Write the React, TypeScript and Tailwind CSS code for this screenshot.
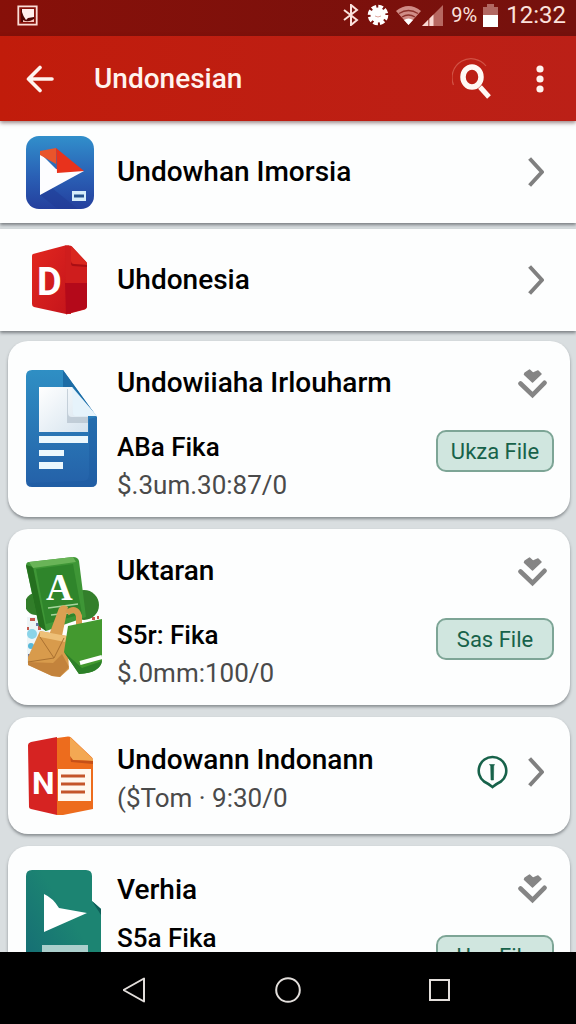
import type { ReactNode } from "react";

const ChevronRight = () => (
  <svg className="w-4 h-[30px] shrink-0" viewBox="0 0 16 30" fill="none" stroke="#808080" strokeWidth="4">
    <path d="M1.6 1.5 14 15 1.6 28.5" strokeLinejoin="round" />
  </svg>
);

const ChevronDouble = () => (
  <svg className="w-[29px] h-[30px]" viewBox="0 0 29 30">
    <path d="M7 4 11.500 1l3.500 3.200L20 2l3 3-8.500 8L6.500 5.500z" fill="#858585" stroke="#858585" strokeWidth="1.500" strokeLinejoin="round" />
    <path d="M2.500 14.500 14.500 26 26.500 13.800" fill="none" stroke="#858585" strokeWidth="4.600" strokeLinecap="round" />
  </svg>
);

const PlayTileIcon = () => (
  <svg className="w-[69px] h-[75px]" viewBox="0 0 69 75">
    <defs>
      <linearGradient id="tile" x1="0" y1="0" x2="0" y2="1">
        <stop offset="0" stopColor="#318fcb" />
        <stop offset=".55" stopColor="#2a60b5" />
        <stop offset="1" stopColor="#243f9d" />
      </linearGradient>
    </defs>
    <rect y="1" width="68" height="73" rx="13" fill="url(#tile)" />
    <path d="M14 60 26 53 52 74H32z" fill="#203994" opacity=".5" />
    <path d="M14 18v42l44-24-28-2z" fill="#fdfdff" />
    <path d="M14 16 30 13v16L14 20z" fill="#e9552b" />
    <path d="M30 13 58 36l-27 2z" fill="#e8321c" />
    <rect x="46" y="56" width="14" height="10" fill="#d6edfa" />
    <path d="M48 61h10" stroke="#25528f" strokeWidth="3" />
  </svg>
);

const BookIcon = () => (
  <svg className="w-[62px] h-[70px] ml-[5px]" viewBox="0 0 62 70">
    <defs>
      <linearGradient id="cover" x1="0" y1="0" x2="1" y2="1">
        <stop offset="0" stopColor="#e2271f" />
        <stop offset="1" stopColor="#c4141b" />
      </linearGradient>
    </defs>
    <path d="M2 9 34 .5h4l2 68.500h-5L3 62q-2-.5-2-3V11q0-1.500 1-2z" fill="url(#cover)" />
    <path d="M34 .5h4q2 0 3 1l14 15q1 1 1 2v43q0 2-2 3l-19 5z" fill="#cf1d1d" />
    <path d="M40 1 56 18v2l-13-1q-3 0-3-3z" fill="#d9271f" />
    <path d="M40 16q0 3 3 3l13 1v2l-14-1q-2 0-2-3z" fill="#a90f14" />
    <path d="M34 38h22v23q0 2-2 3l-19 5z" fill="#b4091a" />
    <text x="6" y="50" fontSize="38" fontWeight="700" fill="#fff" fontFamily="Roboto, sans-serif">D</text>
  </svg>
);

const BlueDocIcon = () => (
  <svg className="w-[71px] h-[119px]" viewBox="0 0 71 119">
    <defs>
      <linearGradient id="doc" x1="0" y1="0" x2="0" y2="1">
        <stop offset="0" stopColor="#2f8fc4" />
        <stop offset="1" stopColor="#2460a8" />
      </linearGradient>
      <linearGradient id="page" x1="0" y1="0" x2="1" y2="1">
        <stop offset="0" stopColor="#fff" />
        <stop offset="1" stopColor="#d5e3ee" />
      </linearGradient>
    </defs>
    <path d="M6 1h31l34 47v64q0 6-6 6H6q-6 0-6-6V7q0-6 6-6z" fill="url(#doc)" />
    <path d="M71 48v64q0 6-6 6H6l-4-4 56-2q5-1 5-6V50z" fill="#1c5a9f" opacity=".45" />
    <path d="M37 1v17h10l24 30z" fill="#1d6ca5" />
    <path d="M13 18h33l16 29v16H13z" fill="url(#page)" />
    <path d="M42 20v24q0 4 4 4h16v6H41V20z" fill="#b3c0cc" opacity=".7" />
    <path d="M46 18 71 47H50q-3 0-3-3z" fill="#e6f3fb" />
    <path d="M13 67h49v7H13zM13 81h25v6H13zM13 93h24v7H13z" fill="#ecf8fd" />
  </svg>
);

const ShoppingIcon = () => (
  <svg className="w-[77px] h-[122px]" viewBox="0 0 77 122">
    <circle cx="10" cy="47" r="11" fill="#317d29" />
    <circle cx="58" cy="48" r="15" fill="#337f2b" />
    <path d="M1 60h22v46H1z" fill="#edf5f7" />
    <circle cx="6" cy="77" r="5" fill="#8bd4e8" />
    <circle cx="5" cy="89" r="3" fill="#58b8d8" />
    <path d="M4 61h5v3H4zM12 69h3v4h-3zM1 70h2v3H1zM66 60h3v3h-3zM71 59h2v3h-2z" fill="#c5574c" />
    <path d="M10 66h3v3h-3zM2 97h3v3H2zM14 80h3v3h-3z" fill="#6a76a8" />
    <path d="M3 5 47 0q5 0 6 4l7 56-40 14-7-5L0 9q0-4 3-4z" fill="#3e9636" />
    <path d="M0 8 7 10l13 64-7-5z" fill="#25701f" />
    <path d="M10 12 47 7l9 50-36 10z" fill="#2f852b" />
    <path d="M3 5 47 0l3 5L7 11z" fill="#69b457" />
    <text x="20" y="43" fontSize="37" fontWeight="700" fill="#fff" fontFamily="Liberation Serif, serif">A</text>
    <path d="M22 51 52 47M25 58l27-3" stroke="#a7d59d" strokeWidth="1.500" />
    <path d="M23 78 33 51q4-5 9-1l-6 29z" fill="#dba052" />
    <path d="M41 56q9-7 12 3v13" fill="none" stroke="#d89b4d" strokeWidth="6" />
    <path d="M14 74 41 79l2 33-9 8-8-1L2 108v-8z" fill="#d89b4c" />
    <path d="M14 74 41 79l-2 6-25-5z" fill="#eec078" />
    <path d="M14 80 28 101 2 105M28 101l10-20" fill="none" stroke="#aa7131" />
    <path d="M2 105 27 106l9-9 7 13-9 10-8-1-24-11z" fill="#ba7936" opacity=".7" />
    <path d="M42 69 76 62v42q-2 12-23 13L38 95z" fill="#43992f" />
    <path d="M38 95 53 117q21-1 23-13l-20 7z" fill="#2d8029" />
    <path d="M54 106 76 100" stroke="#fff" strokeWidth="4" />
  </svg>
);

const OrangeDocIcon = () => (
  <svg className="w-[66px] h-[80px] ml-[2px]" viewBox="0 0 66 80">
    <path d="M29 2 40 .5q2 0 3 1l21 20q1 1 1 3V73l-30 6h-6z" fill="#ed6c1d" />
    <path d="M0 9q0-2 3-3l26-5v78L3 73q-2-.5-2-2z" fill="#d62322" />
    <path d="M42 1 65 23v2l-20-1q-3 0-3-4z" fill="#f3a853" />
    <path d="m42 20 3 4 20 1v3l-22-2z" fill="#c65018" />
    <path d="M30 33h33v32H30z" fill="#fff8ef" />
    <path d="M33 40h24M33 48h24M33 56h24" stroke="#c4552a" strokeWidth="3" />
    <text x="4" y="58" fontSize="32" fontWeight="700" fill="#fff" fontFamily="Roboto, sans-serif">N</text>
  </svg>
);

const TealDocIcon = () => (
  <svg className="w-[75px] h-[119px]" viewBox="0 0 75 119">
    <defs>
      <linearGradient id="teal" x1="0" y1="1" x2="1" y2="0">
        <stop offset="0" stopColor="#146875" />
        <stop offset=".6" stopColor="#1c8472" />
      </linearGradient>
    </defs>
    <path d="M6 0h54q6 0 6 6v25l9 8v80H0V6q0-6 6-6z" fill="url(#teal)" />
    <path d="M66 31 75 39v6z" fill="#0d5f59" />
    <path d="M18 24q9 4 15 14l28 5-43 19z" fill="#fff" />
    <path d="M16 75h46v12H16z" fill="#abcfcc" />
  </svg>
);

type FileCardProps = {
  icon: ReactNode;
  title: string;
  name: string;
  info?: string;
  action: string;
  compact?: boolean;
};

const FileCard = ({ icon, title, name, info, action, compact }: FileCardProps) => (
  <article className="flex h-44 shrink-0 rounded-[20px] bg-[#fdfefe] pl-[18px] pr-4 shadow-[0_2px_3px_rgba(60,65,70,0.5)]">
    <div className={compact ? "w-[91px] shrink-0 pt-6" : "w-[91px] shrink-0 pt-7"}>{icon}</div>
    <div className={compact ? "flex-1 pt-6" : "flex-1 pt-[22px]"}>
      <h2 className="whitespace-nowrap text-[28px] font-medium leading-10">{title}</h2>
      <p className={compact ? "mt-2 whitespace-nowrap text-[26px] font-medium leading-10" : "mt-6 whitespace-nowrap text-[26px] font-medium leading-10"}>{name}</p>
      {info && <p className="whitespace-nowrap text-[26px] leading-9 text-[#4a4a4a]">{info}</p>}
    </div>
    <div className="flex flex-col items-end pt-7">
      <button aria-label={`Expand ${title}`} className="mr-[7px]">
        <ChevronDouble />
      </button>
      <button className="mt-[31px] h-[42px] w-[118px] rounded-[10px] border-2 border-[#7da596] bg-[#d0e6df] text-[22px] text-[#17624a]">
        {action}
      </button>
    </div>
  </article>
);

const StatusBar = () => (
  <div className="flex h-9 shrink-0 items-center bg-gradient-to-r from-[#871009] to-[#75110d] pl-[17px] pr-[10px] text-[#fbe1dc]">
    <svg className="-mt-1.5 w-[21px] h-[21px]" viewBox="0 0 21 21">
      <path d="M1.300 1.300h18.400v18.400H1.300z" fill="none" stroke="#fbdcd6" strokeWidth="1.800" />
      <path d="M4 4h13v13H4z" fill="#4d0603" />
      <path d="M5 4h12v8l-6 1-2 2q-3-4-4-8z" fill="#fff0ed" />
      <path d="M6 15q5 3 11-1v3H6z" fill="#f5c4bd" />
    </svg>
    <div className="-mt-1.5 ml-auto flex items-center">
      <svg className="w-4 h-[22px]" viewBox="0 0 16 22" fill="none" stroke="currentColor" strokeWidth="2">
        <path d="M1 6l13 10-6 5V1l6 5L1 16" />
      </svg>
      <svg className="ml-2 w-[22px] h-[22px]" viewBox="0 0 22 22">
        <circle cx="11" cy="11" r="7.500" fill="#fff" />
        <circle cx="11" cy="11" r="7.800" fill="none" stroke="#fff" strokeWidth="5" strokeDasharray="4.300 1.830" />
        <path d="M8 12q3 2 6 0" fill="none" stroke="#e0a79f" />
      </svg>
      <svg className="ml-1.5 w-[27px] h-[21px]" viewBox="0 0 27 21">
        <path d="M1 6Q13.500-4 26 6L13.500 20z" fill="#d08c86" />
        <path d="M4 8.500q9.500-6 19 0M7 12q6.500-4 13 0" fill="none" stroke="#8b302a" strokeWidth="1.300" />
        <path d="M9 15q4.500-3 9 0l-4.500 5z" fill="#fff" />
      </svg>
      <svg className="w-[21px] h-[21px]" viewBox="0 0 21 21">
        <path d="M0 21 21 0v21z" fill="#b76861" />
        <path d="M0 21l6-6v6zM7.500 21v-7.500l4-4V21z" fill="#f9d8d2" />
      </svg>
      <span className="ml-2 text-xl leading-6">9%</span>
      <svg className="ml-1.5 w-[15px] h-[23px]" viewBox="0 0 15 23">
        <path d="M0 3h4V0h7v3h4v20H0z" fill="#b26862" />
        <path d="M0 11h15v12H0z" fill="#fff" />
      </svg>
      <span className="ml-2 text-2xl leading-6">12:32</span>
    </div>
  </div>
);

const AppHeader = () => (
  <header className="z-10 flex h-[85px] shrink-0 items-center bg-gradient-to-r from-[#c11c0b] to-[#bb2017] pl-[26px] pr-8 text-[#fff3ee] shadow-[0_2px_4px_rgba(60,20,20,0.5)]">
    <button aria-label="Back">
      <svg className="w-7 h-7" viewBox="0 0 28 28" fill="none" stroke="currentColor" strokeWidth="3.600" strokeLinecap="round" strokeLinejoin="round">
        <path d="M14 2.500 2.500 14 14 25.500M3 14h23" />
      </svg>
    </button>
    <h1 className="ml-10 flex-1 text-[28px] font-medium">Undonesian</h1>
    <button aria-label="Search">
      <svg className="w-[42px] h-[42px]" viewBox="0 0 42 42" fill="none">
        <path d="M1.500 27A19 19 0 0 1 34 8" stroke="#df7565" strokeWidth="1.200" opacity=".6" />
        <ellipse cx="20" cy="19" rx="9" ry="10" stroke="#fff8f4" strokeWidth="5.500" />
        <path d="M28 29 37 39" stroke="#fff8f4" strokeWidth="5" />
      </svg>
    </button>
    <button aria-label="More options" className="ml-[42px]">
      <svg className="w-2 h-7" viewBox="0 0 8 28" fill="currentColor">
        <circle cx="4" cy="4" r="3.600" />
        <circle cx="4" cy="14" r="3.600" />
        <circle cx="4" cy="24" r="3.600" />
      </svg>
    </button>
  </header>
);

const App = () => {
  const rows = [
    { title: "Undowhan Imorsia", icon: <PlayTileIcon /> },
    { title: "Uhdonesia", icon: <BookIcon /> },
  ];

  return (
    <div className="flex h-screen flex-col overflow-hidden bg-[#d9dee0] font-[Roboto,sans-serif] text-black">
      <StatusBar />
      <AppHeader />

      <main className="flex min-h-0 flex-1 flex-col overflow-hidden">
        <div className="flex shrink-0 flex-col gap-1.5">
          {rows.map((row) => (
            <a key={row.title} href="#" className="flex h-[102px] items-center bg-[#fdfefe] pl-[26px] pr-8 shadow-[0_2px_3px_rgba(60,65,70,0.6)]">
              <span className="w-[91px] shrink-0">{row.icon}</span>
              <span className="flex-1 whitespace-nowrap text-[28px] font-medium">{row.title}</span>
              <ChevronRight />
            </a>
          ))}
        </div>

        <div className="flex flex-col gap-3 pl-2 pr-1.5 pt-2.5">
          <FileCard icon={<BlueDocIcon />} title="Undowiiaha Irlouharm" name="ABa Fika" info="$.3um.30:87/0" action="Ukza File" />
          <FileCard icon={<ShoppingIcon />} title="Uktaran" name="S5r: Fika" info="$.0mm:100/0" action="Sas File" />

          <a href="#" className="flex h-[117px] shrink-0 items-center rounded-[20px] bg-[#fdfefe] pl-[18px] pr-[26px] shadow-[0_2px_3px_rgba(60,65,70,0.5)]">
            <span className="w-[91px] shrink-0">
              <OrangeDocIcon />
            </span>
            <span className="flex flex-1 flex-col whitespace-nowrap pt-1">
              <span className="text-[28px] font-medium leading-10">Undowann Indonann</span>
              <span className="text-[26px] leading-9 text-[#4a4a4a]">($Tom · 9:30/0</span>
            </span>
            <span className="flex items-center gap-5 pb-2">
              <svg className="w-[31px] h-[34px]" viewBox="0 0 31 34" fill="none" stroke="#17624a">
                <path d="M15.500 2a13.700 13.700 0 0 0-8.500 24.500q4 2 8.500 5.500 4.500-3.500 8.500-5.500A13.700 13.700 0 0 0 15.500 2z" strokeWidth="2.600" />
                <path d="M12.500 9.500h5l-.8 1.500-.2 14h-2.500l-.3-14z" fill="#17624a" strokeWidth=".6" />
              </svg>
              <ChevronRight />
            </span>
          </a>

          <FileCard icon={<TealDocIcon />} title="Verhia" name="S5a Fika" action="Uza File" compact />
        </div>
      </main>

      <nav className="flex h-[72px] shrink-0 items-center justify-center gap-[126px] bg-black pt-1 text-[#e2dedb]">
        <button aria-label="Back">
          <svg className="w-[26px] h-[26px]" viewBox="0 0 26 26" fill="none" stroke="currentColor" strokeWidth="2" strokeLinejoin="round">
            <path d="M20 1.500v23L-.5 13z" transform="translate(1)" />
          </svg>
        </button>
        <button aria-label="Home">
          <svg className="w-[26px] h-[26px]" viewBox="0 0 26 26" fill="none" stroke="currentColor" strokeWidth="2">
            <circle cx="13" cy="13" r="11.800" />
          </svg>
        </button>
        <button aria-label="Recent apps">
          <svg className="w-[26px] h-[26px]" viewBox="0 0 26 26" fill="none" stroke="currentColor" strokeWidth="2">
            <path d="M3 3h19v20H3z" />
          </svg>
        </button>
      </nav>
    </div>
  );
};

export default App;
